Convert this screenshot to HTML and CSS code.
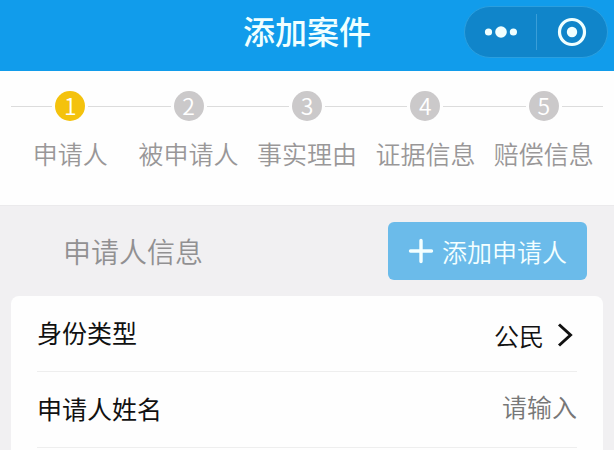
FILE: index.html
```html
<!DOCTYPE html>
<html lang="zh-CN">
<head>
  <meta charset="utf-8">
  <meta name="viewport" content="width=device-width, initial-scale=1">
  <title>添加案件</title>
  <link rel="stylesheet" href="styles.css">
</head>
<body>
  <header class="navbar">
    <h1 class="navbar-title">添加案件</h1>
    <div class="capsule">
      <button class="capsule-button" type="button" aria-label="更多">
        <svg width="34" height="14" viewBox="0 0 34 14" fill="currentColor" aria-hidden="true">
          <circle cx="5.5" cy="7" r="3.6"/>
          <circle cx="18" cy="7" r="5.8"/>
          <circle cx="30.4" cy="7" r="3.6"/>
        </svg>
      </button>
      <button class="capsule-button" type="button" aria-label="关闭">
        <svg width="30" height="30" viewBox="0 0 30 30" aria-hidden="true">
          <circle cx="15" cy="15" r="12.5" fill="none" stroke="currentColor" stroke-width="3.2"/>
          <circle cx="15" cy="15" r="5.2" fill="currentColor"/>
        </svg>
      </button>
    </div>
  </header>

  <main class="content">
    <ol class="steps">
      <li class="step step-active" aria-current="step"><span class="step-marker"><span class="step-number">1</span></span><span class="step-label">申请人</span></li>
      <li class="step"><span class="step-marker"><span class="step-number">2</span></span><span class="step-label">被申请人</span></li>
      <li class="step"><span class="step-marker"><span class="step-number">3</span></span><span class="step-label">事实理由</span></li>
      <li class="step"><span class="step-marker"><span class="step-number">4</span></span><span class="step-label">证据信息</span></li>
      <li class="step"><span class="step-marker"><span class="step-number">5</span></span><span class="step-label">赔偿信息</span></li>
    </ol>

    <div class="section-head">
      <h2 class="section-title">申请人信息</h2>
      <button class="add-button" type="button">
        <svg width="26" height="26" viewBox="0 0 26 26" stroke="currentColor" stroke-width="3.4" stroke-linecap="round" aria-hidden="true">
          <path d="M13 2.5v21M2.5 13h21"/>
        </svg>
        添加申请人
      </button>
    </div>

    <form class="card">
      <div class="row">
        <label class="row-label" for="identity">身份类型</label>
        <span class="picker">
          <select class="picker-select" id="identity">
            <option>公民</option>
          </select>
          <svg width="18" height="26" viewBox="0 0 18 26" fill="none" stroke="currentColor" stroke-width="3" aria-hidden="true">
            <path d="M3 2.5L14.5 13L3 23.5"/>
          </svg>
        </span>
      </div>
      <div class="row">
        <label class="row-label" for="name">申请人姓名</label>
        <input class="row-input" id="name" type="text" placeholder="请输入">
      </div>
    </form>
  </main>
</body>
</html>
```
FILE: styles.css
```css
* {
  box-sizing: border-box;
}

body {
  display: flex;
  flex-direction: column;
  min-height: 100vh;
  margin: 0;
  background: #f1f0f2;
  color: #111;
  font-family: "Noto Sans CJK SC", sans-serif;
  font-size: 25px;
  line-height: 36px;
}

button,
input,
select {
  padding: 0;
  border: 0;
  background: none;
  color: inherit;
  font: inherit;
}

svg {
  display: block;
  flex: none;
}

.navbar {
  display: grid;
  grid-template-columns: 1fr auto 1fr;
  align-items: center;
  height: 71px;
  padding: 0 6px 8px;
  background: #119ceb;
  color: #f0ffff;
}

.navbar-title {
  grid-column: 2;
  margin: 0;
  padding-bottom: 4px;
  font-size: 32px;
  font-weight: 500;
  line-height: 48px;
}

.capsule {
  display: flex;
  justify-self: end;
  width: 144px;
  height: 52px;
  border: 1px solid #2b9fdf;
  border-radius: 26px;
  background: #1085ca;
}

.capsule-button {
  display: flex;
  flex: 1;
  align-items: center;
  justify-content: center;
}

.capsule-button + .capsule-button {
  border-left: 1px solid #3a9ed8;
  border-image: linear-gradient(transparent 16%, #3a9ed8 16% 84%, transparent 84%) 1;
}

.content {
  display: flex;
  flex: 1;
  flex-direction: column;
}

.steps {
  display: flex;
  margin: 0;
  padding: 20px 11px 34px;
  border-bottom: 1px solid #ebeaec;
  background: #fefefe;
  list-style: none;
}

.step {
  display: flex;
  flex: 1;
  flex-direction: column;
  gap: 14px;
  align-items: center;
  color: #999798;
  white-space: nowrap;
}

.step-marker {
  display: flex;
  gap: 3px;
  align-items: center;
  align-self: stretch;
}

.step-marker::before,
.step-marker::after {
  flex: 1;
  height: 1px;
  background: #dcdcdc;
  content: "";
}

.step-number {
  width: 30px;
  height: 30px;
  border-radius: 50%;
  background: #cbc9ca;
  color: #fff;
  font-size: 23px;
  font-weight: 350;
  line-height: 28px;
  text-align: center;
}

.step-active .step-number {
  background: #f4c20d;
}

.step-label {
  font-weight: 350;
}

.section-head {
  display: flex;
  align-items: center;
  justify-content: space-between;
  padding: 16px 27px 16px 63px;
}

.section-title {
  margin: 0;
  color: #919092;
  font-size: 28px;
  font-weight: 350;
}

.add-button {
  display: flex;
  gap: 8px;
  align-items: center;
  justify-content: center;
  height: 58px;
  padding: 0 20px;
  border-radius: 6px;
  background: #6bbbea;
  color: #f4ffff;
  font-weight: 350;
}

.card {
  flex: 1;
  margin: 0 11px;
  padding: 0 26px;
  border-radius: 8px 8px 0 0;
  background: #fefefe;
}

.row {
  display: flex;
  align-items: center;
  justify-content: space-between;
  height: 76px;
  padding-bottom: 4px;
  border-bottom: 1px solid #eee;
}

.row-label {
  flex: none;
}

.picker {
  display: flex;
  gap: 12px;
  align-items: center;
  padding: 6px 3px 0 0;
}

.picker-select {
  appearance: none;
  font-weight: 350;
  text-align: right;
}

.row-input {
  flex: 1;
  min-width: 0;
  padding-bottom: 4px;
  outline: 0;
  text-align: right;
}

.row-input::placeholder {
  color: #777;
  font-weight: 350;
  opacity: 1;
}
```
